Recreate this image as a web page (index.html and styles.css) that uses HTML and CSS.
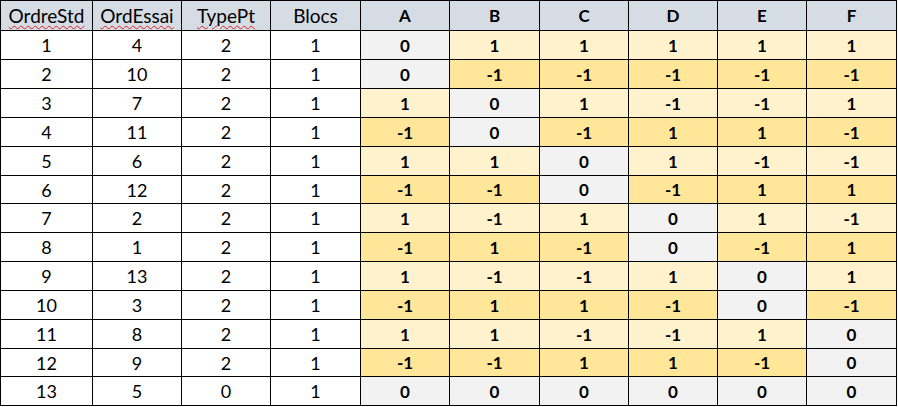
FILE: index.html
```html
<!DOCTYPE html>
<html lang="fr">
<head>
<meta charset="utf-8">
<title>Plan d'expériences</title>
<link rel="stylesheet" href="styles.css">
</head>
<body>
<div class="sheet">
  <div class="c h t"><span class="spell">OrdreStd</span></div>
  <div class="c h t"><span class="spell">OrdEssai</span></div>
  <div class="c h t"><span class="spell">TypePt</span></div>
  <div class="c h t">Blocs</div>
  <div class="c h b">A</div><div class="c h b">B</div><div class="c h b">C</div><div class="c h b">D</div><div class="c h b">E</div><div class="c h b">F</div>

  <div class="c">1</div><div class="c">4</div><div class="c">2</div><div class="c">1</div>
  <div class="c b z">0</div><div class="c b l">1</div><div class="c b l">1</div><div class="c b l">1</div><div class="c b l">1</div><div class="c b l">1</div>

  <div class="c">2</div><div class="c">10</div><div class="c">2</div><div class="c">1</div>
  <div class="c b z">0</div><div class="c b d">-1</div><div class="c b d">-1</div><div class="c b d">-1</div><div class="c b d">-1</div><div class="c b d">-1</div>

  <div class="c">3</div><div class="c">7</div><div class="c">2</div><div class="c">1</div>
  <div class="c b l">1</div><div class="c b z">0</div><div class="c b l">1</div><div class="c b l">-1</div><div class="c b l">-1</div><div class="c b l">1</div>

  <div class="c">4</div><div class="c">11</div><div class="c">2</div><div class="c">1</div>
  <div class="c b d">-1</div><div class="c b z">0</div><div class="c b d">-1</div><div class="c b d">1</div><div class="c b d">1</div><div class="c b d">-1</div>

  <div class="c">5</div><div class="c">6</div><div class="c">2</div><div class="c">1</div>
  <div class="c b l">1</div><div class="c b l">1</div><div class="c b z">0</div><div class="c b l">1</div><div class="c b l">-1</div><div class="c b l">-1</div>

  <div class="c">6</div><div class="c">12</div><div class="c">2</div><div class="c">1</div>
  <div class="c b d">-1</div><div class="c b d">-1</div><div class="c b z">0</div><div class="c b d">-1</div><div class="c b d">1</div><div class="c b d">1</div>

  <div class="c">7</div><div class="c">2</div><div class="c">2</div><div class="c">1</div>
  <div class="c b l">1</div><div class="c b l">-1</div><div class="c b l">1</div><div class="c b z">0</div><div class="c b l">1</div><div class="c b l">-1</div>

  <div class="c">8</div><div class="c">1</div><div class="c">2</div><div class="c">1</div>
  <div class="c b d">-1</div><div class="c b d">1</div><div class="c b d">-1</div><div class="c b z">0</div><div class="c b d">-1</div><div class="c b d">1</div>

  <div class="c">9</div><div class="c">13</div><div class="c">2</div><div class="c">1</div>
  <div class="c b l">1</div><div class="c b l">-1</div><div class="c b l">-1</div><div class="c b l">1</div><div class="c b z">0</div><div class="c b l">1</div>

  <div class="c">10</div><div class="c">3</div><div class="c">2</div><div class="c">1</div>
  <div class="c b d">-1</div><div class="c b d">1</div><div class="c b d">1</div><div class="c b d">-1</div><div class="c b z">0</div><div class="c b d">-1</div>

  <div class="c">11</div><div class="c">8</div><div class="c">2</div><div class="c">1</div>
  <div class="c b l">1</div><div class="c b l">1</div><div class="c b l">-1</div><div class="c b l">-1</div><div class="c b l">1</div><div class="c b z">0</div>

  <div class="c">12</div><div class="c">9</div><div class="c">2</div><div class="c">1</div>
  <div class="c b d">-1</div><div class="c b d">-1</div><div class="c b d">1</div><div class="c b d">1</div><div class="c b d">-1</div><div class="c b z">0</div>

  <div class="c">13</div><div class="c">5</div><div class="c">0</div><div class="c">1</div>
  <div class="c b z">0</div><div class="c b z">0</div><div class="c b z">0</div><div class="c b z">0</div><div class="c b z">0</div><div class="c b z">0</div>
</div>
</body>
</html>
```
FILE: styles.css
```css
html, body {
  margin: 0;
  padding: 0;
  background: #ffffff;
}

.sheet {
  display: grid;
  grid-template-columns: 91px 88px 88px 89px 88px 89px 88px 88px 88px 89px;
  grid-template-rows: 29px 28px 28px 28px 28px 28px 27px 28px 28px 28px 28px 28px 27px 28px;
  gap: 1px;
  padding: 1px;
  width: max-content;
  background: #000000;
  font-family: Lato, "Liberation Sans", sans-serif;
  font-size: 18px;
  color: #000000;
}

.c {
  background: #ffffff;
  display: flex;
  align-items: center;
  justify-content: center;
  line-height: 1;
}

.h {
  background: #d6dce4;
}

.t {
  font-size: 19px;
}

.b {
  font-weight: bold;
  font-size: 17px;
}

.z {
  background: #f2f2f2;
}

.l {
  background: #fff2cc;
}

.d {
  background: #ffe699;
}

.spell {
  text-decoration: underline wavy #e02020;
  text-decoration-thickness: 1px;
  text-underline-offset: 2px;
}
```
